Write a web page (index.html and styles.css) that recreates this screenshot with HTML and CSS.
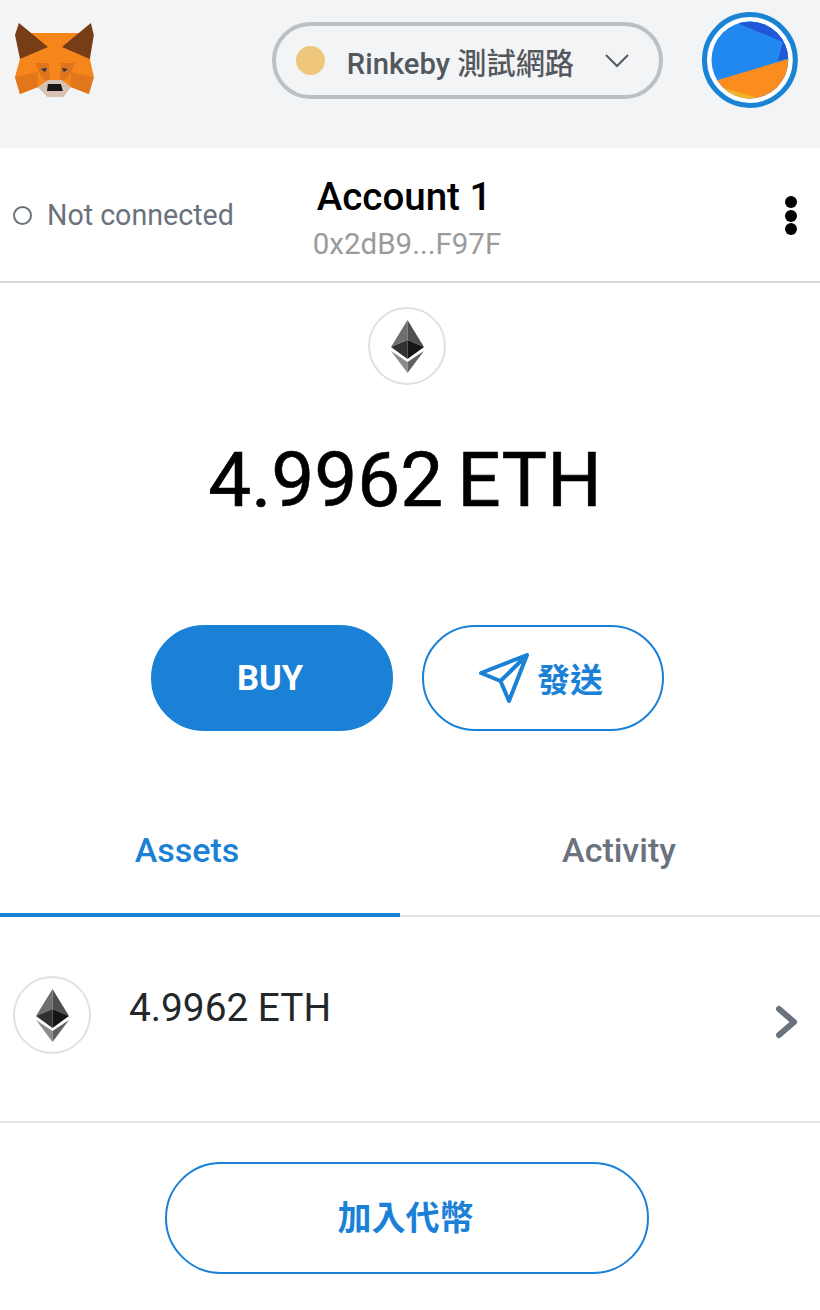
FILE: index.html
```html
<!DOCTYPE html>
<html lang="zh-Hant">
<head>
    <title>MetaMask</title>
    <link rel="stylesheet" href="styles.css">
</head>
<body>
    <header class="topbar">
        <svg class="fox" viewBox="14 20 82 80">
            <polygon fill="#f6851b" points="32,33 78,33 90,59 94,77 89,94 71,87 63,97 48,97 38,87 20,94 15,77 20,59"/>
            <polygon fill="#e2761b" points="15,77 38,72 38,87 20,94"/>
            <polygon fill="#e2761b" points="94,77 71,72 71,87 89,94"/>
            <polygon fill="#dc7420" points="35,63 49,63 50,83 42,78"/>
            <polygon fill="#dc7420" points="75,63 61,63 60,83 68,78"/>
            <polygon fill="#763d16" points="19,23 48,47 20,59 15,35"/>
            <polygon fill="#763d16" points="91,23 62,47 90,59 94,35"/>
            <polygon fill="#d7c1b3" points="38,87 48,80 62,80 71,87 63,97 48,97"/>
            <polygon fill="#161616" points="48,84 61,84 63,91 47,91"/>
            <polygon fill="#233447" points="41,69 47,68 45,72"/>
            <polygon fill="#233447" points="62,68 68,69 64,72"/>
        </svg>
        <div class="network">
            <span class="network-dot"></span>
            <span class="network-name">Rinkeby 測試網路</span>
            <svg class="network-caret" width="26" height="16" viewBox="0 0 26 16"><path d="M2 2 L13 13 L24 2" fill="none" stroke="#55595e" stroke-width="2"/></svg>
        </div>
        <svg class="avatar" width="96" height="96" viewBox="0 0 96 96">
            <defs><clipPath id="avatarClip"><circle cx="48" cy="48" r="38.5"/></clipPath></defs>
            <circle cx="48" cy="48" r="45.5" fill="#fff" stroke="#1a83d4" stroke-width="5"/>
            <g clip-path="url(#avatarClip)">
                <rect width="96" height="96" fill="#2188f0"/>
                <polygon fill="#2257d9" points="33,10 81,30 76,49 96,44 96,0 33,0"/>
                <polygon fill="#fb8d1e" points="16,68 96,44 96,96 0,96 0,72"/>
                <polygon fill="#f0b429" points="21,76 60,87 50,96 20,96"/>
            </g>
        </svg>
    </header>

    <section class="account-row">
        <div class="status"><span class="status-ring"></span>Not connected</div>
        <div class="account">
            <div class="account-name">Account 1</div>
            <div class="account-address">0x2dB9...F97F</div>
        </div>
        <div class="more"><i></i><i></i><i></i></div>
    </section>

    <section class="balance">
        <span class="eth-logo">
            <svg width="33" height="53" viewBox="0 0 33 53">
                <polygon fill="#6f6f6f" points="16.5,0 0,27 16.5,20"/>
                <polygon fill="#4f4f4f" points="16.5,0 33,27 16.5,20"/>
                <polygon fill="#303030" points="0,27 16.5,20 16.5,39"/>
                <polygon fill="#151515" points="33,27 16.5,20 16.5,39"/>
                <polygon fill="#8c8c8c" points="0,31 16.5,42 16.5,53"/>
                <polygon fill="#606060" points="33,31 16.5,42 16.5,53"/>
            </svg>
        </span>
        <div class="balance-amount">4.9962<span class="balance-unit">ETH</span></div>
        <div class="actions">
            <button class="btn btn-buy">BUY</button>
            <button class="btn btn-send">
                <svg width="50" height="50" viewBox="0 0 50 50"><path d="M2 20 L48 2 L30 48 L21.5 28 Z M48 2 L21.5 28" fill="none" stroke="#1a81d6" stroke-width="4" stroke-linejoin="round" stroke-linecap="round"/></svg>
                發送
            </button>
        </div>
    </section>

    <nav class="tabs">
        <div class="tab tab-active">Assets</div>
        <div class="tab">Activity</div>
    </nav>

    <section class="asset-row">
        <span class="eth-logo">
            <svg width="33" height="53" viewBox="0 0 33 53">
                <polygon fill="#6f6f6f" points="16.5,0 0,27 16.5,20"/>
                <polygon fill="#4f4f4f" points="16.5,0 33,27 16.5,20"/>
                <polygon fill="#303030" points="0,27 16.5,20 16.5,39"/>
                <polygon fill="#151515" points="33,27 16.5,20 16.5,39"/>
                <polygon fill="#8c8c8c" points="0,31 16.5,42 16.5,53"/>
                <polygon fill="#606060" points="33,31 16.5,42 16.5,53"/>
            </svg>
        </span>
        <div class="asset-amount">4.9962 ETH</div>
        <svg class="asset-chevron" width="24" height="34" viewBox="0 0 24 34"><path d="M4 4 L19 17 L4 30" fill="none" stroke="#6a737d" stroke-width="6" stroke-linecap="round" stroke-linejoin="round"/></svg>
    </section>

    <div class="add-token">
        <button class="btn btn-add">加入代幣</button>
    </div>
</body>
</html>
```

FILE: styles.css
```css
body {
    margin: 0;
    font-family: Roboto, "Noto Sans CJK TC", sans-serif;
    background: #fff;
    overflow: hidden;
}
.topbar {
    height: 148px;
    background: #f2f4f6;
    box-sizing: border-box;
    display: flex;
    align-items: flex-start;
    padding: 12px 22px 0 14px;
}
.fox {
    width: 82px;
    height: 80px;
    margin-top: 8px;
}
.network {
    width: 392px;
    height: 77px;
    box-sizing: border-box;
    margin: 10px 0 0 176px;
    border: 4px solid #bbc0c5;
    border-radius: 40px;
    display: flex;
    align-items: center;
    padding: 0 29px 0 20px;
}
.network-dot {
    width: 29px;
    height: 29px;
    border-radius: 50%;
    background: #eec67c;
}
.network-name {
    margin-left: 22px;
    flex: 1;
    font-size: 29.2px;
    font-weight: 500;
    color: #54585d;
    white-space: nowrap;
}
.avatar {
    margin-left: 39px;
}
.account-row {
    height: 135px;
    box-sizing: border-box;
    border-bottom: 2px solid #d6d9dc;
    position: relative;
    display: flex;
    justify-content: center;
    padding: 27px 6px 0 0;
}
.status {
    position: absolute;
    left: 13px;
    top: 50px;
    display: flex;
    align-items: center;
    gap: 15px;
    font-size: 28.6px;
    color: #6a737d;
}
.status-ring {
    width: 19px;
    height: 19px;
    box-sizing: border-box;
    border: 2px solid #6a737d;
    border-radius: 50%;
}
.account {
    text-align: center;
}
.account-name {
    font-size: 38.5px;
    font-weight: 500;
    color: #000;
    line-height: 44px;
    padding-right: 6px;
}
.account-address {
    font-size: 29.5px;
    color: #9b9b9b;
    line-height: 50px;
}
.more {
    position: absolute;
    right: 23px;
    top: 48px;
    display: flex;
    flex-direction: column;
    gap: 1.5px;
}
.more i {
    width: 12px;
    height: 12px;
    border-radius: 50%;
    background: #000;
}
.balance {
    display: flex;
    flex-direction: column;
    align-items: center;
    padding: 24px 6px 0 0;
    height: 504px;
    box-sizing: border-box;
}
.eth-logo {
    width: 78px;
    height: 78px;
    box-sizing: border-box;
    border: 2px solid #dfe1e3;
    border-radius: 50%;
    display: flex;
    align-items: center;
    justify-content: center;
    flex-shrink: 0;
}
.balance-amount {
    margin: 50px 4px 0 0;
    font-size: 76.5px;
    line-height: 90px;
    color: #000;
    -webkit-text-stroke: 0.6px #000;
}
.balance-unit {
    margin-left: 14px;
}
.actions {
    margin-top: 100px;
    display: flex;
    gap: 29px;
}
.btn {
    font-family: inherit;
    font-weight: 700;
    cursor: pointer;
}
.btn-buy, .btn-send {
    width: 242px;
    height: 106px;
    border-radius: 53px;
    border: 2px solid #1a81d6;
    display: flex;
    align-items: center;
    justify-content: center;
    padding: 0 3px 0 0;
}
.btn-buy {
    background: #1a81d6;
    color: #fff;
    font-size: 34.5px;
}
.btn-send {
    background: #fff;
    color: #1a81d6;
    font-size: 33px;
    gap: 8px;
}
.tabs {
    display: flex;
    height: 130px;
    box-sizing: border-box;
    border-bottom: 2px solid #e2e4e6;
}
.tab {
    box-sizing: border-box;
    padding-top: 43px;
    text-align: center;
    font-size: 34px;
    font-weight: 500;
    color: #6a737d;
}
.tab-active {
    width: 400px;
    padding-right: 26px;
    color: #1a81d6;
    border-bottom: 4px solid #1a81d6;
    margin-bottom: -2px;
}
.tab:last-child {
    width: 420px;
    padding-left: 18px;
}
.asset-row {
    height: 206px;
    box-sizing: border-box;
    border-bottom: 2px solid #e2e4e6;
    display: flex;
    align-items: flex-start;
    padding: 59px 21px 0 13px;
}
.asset-amount {
    flex: 1;
    margin: 10px 0 0 38px;
    font-size: 38.8px;
    line-height: 44px;
    color: #24272a;
}
.asset-chevron {
    margin-top: 29px;
}
.add-token {
    display: flex;
    justify-content: center;
    padding: 39px 6px 0 0;
}
.btn-add {
    width: 484px;
    height: 112px;
    border-radius: 56px;
    background: #fff;
    border: 2px solid #1a81d6;
    color: #1a81d6;
    font-size: 34px;
    padding: 0 3px 6px 0;
}
```
